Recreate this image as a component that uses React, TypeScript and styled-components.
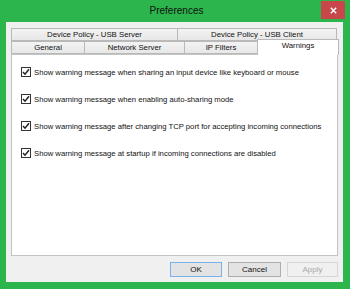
import React from "react";
import styled, { createGlobalStyle } from "styled-components";

const Global = createGlobalStyle`
  html, body { margin: 0; padding: 0; background: #2bb34b; }
  #root { width: 350px; height: 289px; }
  * { box-sizing: border-box; }
`;

const Frame = styled.div`
  width: 350px;
  height: 289px;
  background: #2cb54c;
  display: flex;
  flex-direction: column;
  padding: 0 7px 7px 6px;
  font-family: "Liberation Sans", Arial, sans-serif;
  color: #000;
`;

const TitleBar = styled.div`
  height: 22px;
  display: grid;
  grid-template-columns: 1fr auto 1fr;
  align-items: start;
  margin-right: -2px;
`;

const Title = styled.div`
  grid-column: 2;
  font-size: 10px;
  line-height: 22px;
  color: #111;
  padding-left: 2px;
`;

const Close = styled.div`
  grid-column: 3;
  justify-self: end;
  width: 24px;
  height: 18px;
  margin-top: 1px;
  background: #c7474a;
  color: #fff;
  display: flex;
  align-items: center;
  justify-content: center;
`;

const Client = styled.div`
  flex: 1;
  background: #f0f0f0;
  display: flex;
  flex-direction: column;
  padding: 6px 4px 5px 5px;
`;

const TabRow = styled.div`
  display: flex;
  height: 13px;
`;

const Tab = styled.div<{ $w: number; $selected?: boolean }>`
  flex: none;
  width: ${(p) => (p.$selected ? p.$w + 3 : p.$w)}px;
  height: ${(p) => (p.$selected ? 16 : 13)}px;
  margin: ${(p) => (p.$selected ? "-2px -2px -1px -1px" : "0")};
  position: relative;
  z-index: ${(p) => (p.$selected ? 1 : 0)};
  border: 1px solid #b9b9b9;
  border-bottom: ${(p) => (p.$selected ? "none" : "1px solid #b9b9b9")};
  border-left-width: ${(p) => (p.$selected ? 1 : 0)}px;
  background: ${(p) =>
    p.$selected ? "#ffffff" : "linear-gradient(#f3f3f3, #e7e7e7)"};
  font-size: 7.8px;
  line-height: ${(p) => (p.$selected ? 12 : 11)}px;
  text-align: center;
  white-space: nowrap;
  color: #111;
  &:first-child {
    border-left-width: 1px;
  }
`;

const Panel = styled.div`
  height: 202px;
  margin-right: 1px;
  background: #fff;
  border: 1px solid #c4c4c4;
  display: flex;
  flex-direction: column;
  gap: 13px;
  padding: 10px 0 0 9px;
`;

const Row = styled.label`
  display: flex;
  align-items: center;
  gap: 3px;
  height: 14px;
  font-size: 7.7px;
  white-space: nowrap;
  color: #111;
`;

const Box = styled.span`
  width: 10px;
  height: 10px;
  border: 1px solid #333;
  background: #fff;
  display: flex;
  align-items: center;
  justify-content: center;
`;

const Buttons = styled.div`
  display: flex;
  justify-content: flex-end;
  gap: 6px;
  margin-top: 6px;
  margin-right: 1px;
`;

const Button = styled.div<{ $w: number; $variant?: "default" | "disabled" }>`
  width: ${(p) => p.$w}px;
  height: 15px;
  border: 1px solid
    ${(p) =>
      p.$variant === "default"
        ? "#78b2ec"
        : p.$variant === "disabled"
        ? "#d6d6d6"
        : "#adadad"};
  background: ${(p) => (p.$variant === "disabled" ? "#f0f0f0" : "#e3e3e3")};
  color: ${(p) => (p.$variant === "disabled" ? "#a8a8a8" : "#111")};
  font-size: 8px;
  line-height: 13px;
  text-align: center;
`;

const Check = () => (
  <svg width="8" height="8" viewBox="0 0 8 8">
    <path d="M1 4 L3 6.2 L7 1.2" fill="none" stroke="#222" strokeWidth="1.5" />
  </svg>
);

const items = [
  "Show warning message when sharing an input device like keyboard or mouse",
  "Show warning message when enabling auto-sharing mode",
  "Show warning message after changing TCP port for accepting incoming connections",
  "Show warning message at startup if incoming connections are disabled",
];

export default function App() {
  return (
    <>
      <Global />
      <Frame>
        <TitleBar>
          <Title>Preferences</Title>
          <Close>
            <svg width="7" height="7" viewBox="0 0 7 7">
              <path d="M0.8 0.8 L6.2 6.2 M6.2 0.8 L0.8 6.2" stroke="#fff" strokeWidth="1.4" />
            </svg>
          </Close>
        </TitleBar>
        <Client>
          <TabRow>
            <Tab $w={167}>Device Policy - USB Server</Tab>
            <Tab $w={159}>Device Policy - USB Client</Tab>
          </TabRow>
          <TabRow>
            <Tab $w={74}>General</Tab>
            <Tab $w={100}>Network Server</Tab>
            <Tab $w={73}>IP Filters</Tab>
            <Tab $w={79} $selected>
              Warnings
            </Tab>
          </TabRow>
          <Panel>
            {items.map((t) => (
              <Row key={t}>
                <Box>
                  <Check />
                </Box>
                {t}
              </Row>
            ))}
          </Panel>
          <Buttons>
            <Button $w={52} $variant="default">OK</Button>
            <Button $w={53}>Cancel</Button>
            <Button $w={51} $variant="disabled">Apply</Button>
          </Buttons>
        </Client>
      </Frame>
    </>
  );
}
